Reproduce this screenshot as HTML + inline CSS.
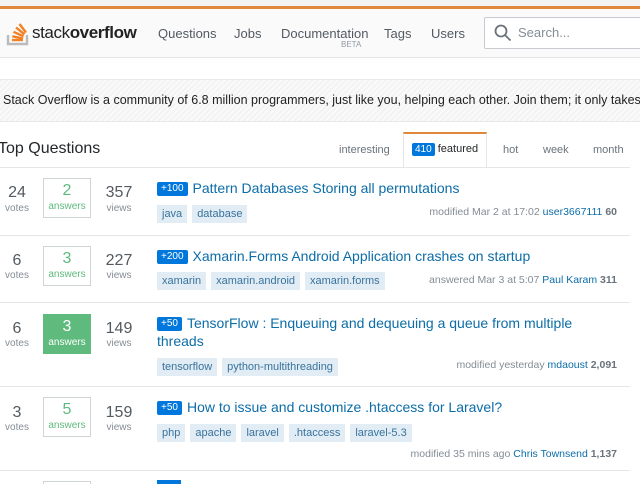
<!DOCTYPE html>
<html><head><meta charset="utf-8"><style>
*{margin:0;padding:0;box-sizing:border-box}
html,body{width:640px;height:484px;overflow:hidden}
body{background:#fff;font-family:"Liberation Sans",Arial,sans-serif;position:relative;color:#242729}
#w{position:absolute;left:0;top:0;width:640px;height:484px;overflow:hidden}
.a{position:absolute;white-space:nowrap}
.nav{font-size:13px;color:#535a60;top:26px}
.num{font-size:16px;color:#535a60;text-align:center;width:34px}
.lbl{font-size:10px;color:#848d95;text-align:center;width:34px}
.box{position:absolute;width:48px;height:40px;border:1px solid #cfd4d6;text-align:center;color:#5eba7d}
.box b{display:block;font-weight:normal;font-size:16px;margin-top:3px}
.box i{display:block;font-style:normal;font-size:10px;margin-top:1px}
.title{font-size:14px;color:#0c6da8;line-height:18px}
.badge{display:inline-block;background:#0077dd;color:#fff;font-size:10px;line-height:12px;padding:1px 4px;border-radius:2px;margin-right:5px;vertical-align:2px}
.tag{display:inline-block;background:#e1ecf4;color:#39739d;font-size:11px;padding:3px 5px;margin-right:5px}
.meta{font-size:10.5px;color:#848d95;right:23px}
.meta span{color:#0c6da8}.meta b{color:#6a737c}
.sep{position:absolute;left:0;width:630px;height:1px;background:#e4e6e8}
.tab{font-size:11px;color:#6a737c;top:144px}
</style></head><body><div id="w">
<div class="a" style="left:0;top:0;width:640px;height:6px;background:#f3f3f3"></div>
<div class="a" style="left:0;top:6px;width:640px;height:3px;background:#e0873b"></div>
<div class="a" style="left:0;top:9px;width:640px;height:49px;background:#fafafb;border-bottom:1px solid #e4e6e8"></div>
<svg class="a" style="left:6px;top:16px" width="24" height="30" viewBox="0 0 24 30">
<path d="M2 19v9h19v-9" fill="none" stroke="#bcbbbb" stroke-width="2.4"/>
<g stroke="#f48024" stroke-width="2.4"><path d="M6 24h11"/><path d="M6.3 20.3l10.8 2.2"/><path d="M7.5 15.8l10 4.5"/><path d="M10 11.5l8.5 6.8"/><path d="M13.5 8l6.5 8.5"/></g>
</svg>
<div class="a" style="left:32px;top:23px;font-size:17px;color:#222;letter-spacing:-0.4px">stack<b>overflow</b></div>
<div class="a nav" style="left:158px">Questions</div>
<div class="a nav" style="left:234px">Jobs</div>
<div class="a nav" style="left:281px">Documentation</div>
<div class="a" style="left:341px;top:40px;font-size:8px;color:#9199a1">BETA</div>
<div class="a nav" style="left:384px">Tags</div>
<div class="a nav" style="left:431px">Users</div>
<div class="a" style="left:484px;top:17px;width:156px;height:32px;background:#fff;border:1px solid #c8ccd0;border-right:none;border-radius:2px 0 0 2px"></div>
<svg class="a" style="left:494px;top:24px" width="18" height="18" viewBox="0 0 18 18"><circle cx="7" cy="7" r="5.5" fill="none" stroke="#6a737c" stroke-width="1.8"/><path d="M11 11l5.5 5.5" stroke="#6a737c" stroke-width="1.8"/></svg>
<div class="a" style="left:518px;top:25px;font-size:13px;color:#848d95">Search...</div>
<div class="a" style="left:0;top:79px;width:640px;height:43px;background:repeating-linear-gradient(135deg,#f3f3f3 0 2px,#fafafa 2px 4px);border-top:1px solid #e8e8e8;border-bottom:1px solid #e8e8e8"></div>
<div class="a" style="left:3px;top:93px;width:637px;overflow:hidden;font-size:12.5px;color:#222">Stack Overflow is a community of 6.8 million programmers, just like you, helping each other. Join them; it only takes a minute:</div>
<div class="a" style="left:-2px;top:140px;font-size:16px;color:#242729">Top Questions</div>
<div class="a tab" style="left:339px">interesting</div>
<div class="a" style="left:403px;top:132px;width:84px;height:36px;background:#fff;border:1px solid #e4e6e8;border-top:2px solid #e0873b;border-bottom:none"></div>
<div class="a" style="left:412px;top:143px;font-size:11px;color:#242729"><span style="background:#0077dd;color:#fff;padding:1px 3px;border-radius:2px;font-size:10px">410</span> featured</div>
<div class="a tab" style="left:503px">hot</div>
<div class="a tab" style="left:543px">week</div>
<div class="a tab" style="left:593px">month</div>
<div class="sep" style="top:167px"></div>

<div class="a num" style="left:0;top:184px">24</div><div class="a lbl" style="left:0;top:203px">votes</div>
<div class="box" style="left:43px;top:178px"><b>2</b><i>answers</i></div>
<div class="a num" style="left:102px;top:184px">357</div><div class="a lbl" style="left:102px;top:203px">views</div>
<div class="a title" style="left:157px;top:179px"><span class="badge">+100</span>Pattern Databases Storing all permutations</div>
<div class="a" style="left:157px;top:204px"><span class="tag">java</span><span class="tag">database</span></div>
<div class="a meta" style="top:206px">modified Mar 2 at 17:02 <span>user3667111</span> <b>60</b></div>
<div class="sep" style="top:235px"></div>

<div class="a num" style="left:0;top:252px">6</div><div class="a lbl" style="left:0;top:270px">votes</div>
<div class="box" style="left:43px;top:246px"><b>3</b><i>answers</i></div>
<div class="a num" style="left:102px;top:252px">227</div><div class="a lbl" style="left:102px;top:270px">views</div>
<div class="a title" style="left:157px;top:247px"><span class="badge">+200</span>Xamarin.Forms Android Application crashes on startup</div>
<div class="a" style="left:157px;top:271px"><span class="tag">xamarin</span><span class="tag">xamarin.android</span><span class="tag">xamarin.forms</span></div>
<div class="a meta" style="top:274px">answered Mar 3 at 5:07 <span>Paul Karam</span> <b>311</b></div>
<div class="sep" style="top:302px"></div>

<div class="a num" style="left:0;top:320px">6</div><div class="a lbl" style="left:0;top:338px">votes</div>
<div class="box" style="left:43px;top:314px;background:#5eba7d;border-color:#5eba7d;color:#fff"><b>3</b><i>answers</i></div>
<div class="a num" style="left:102px;top:320px">149</div><div class="a lbl" style="left:102px;top:338px">views</div>
<div class="a title" style="left:157px;top:314px;white-space:normal;width:440px"><span class="badge">+50</span>TensorFlow : Enqueuing and dequeuing a queue from multiple threads</div>
<div class="a" style="left:157px;top:357px"><span class="tag">tensorflow</span><span class="tag">python-multithreading</span></div>
<div class="a meta" style="top:359px">modified yesterday <span>mdaoust</span> <b>2,091</b></div>
<div class="sep" style="top:386px"></div>

<div class="a num" style="left:0;top:404px">3</div><div class="a lbl" style="left:0;top:422px">votes</div>
<div class="box" style="left:43px;top:397px"><b>5</b><i>answers</i></div>
<div class="a num" style="left:102px;top:404px">159</div><div class="a lbl" style="left:102px;top:422px">views</div>
<div class="a title" style="left:157px;top:398px"><span class="badge">+50</span>How to issue and customize .htaccess for Laravel?</div>
<div class="a" style="left:157px;top:423px"><span class="tag">php</span><span class="tag">apache</span><span class="tag">laravel</span><span class="tag">.htaccess</span><span class="tag">laravel-5.3</span></div>
<div class="a meta" style="top:448px">modified 35 mins ago <span>Chris Townsend</span> <b>1,137</b></div>
<div class="sep" style="top:470px"></div>
<div class="a" style="left:43px;top:481px;width:48px;height:3px;border:1px solid #cfd4d6;border-bottom:none"></div>
<div class="a" style="left:157px;top:480px;width:24px;height:4px;background:#0077dd"></div>
</div></body></html>
